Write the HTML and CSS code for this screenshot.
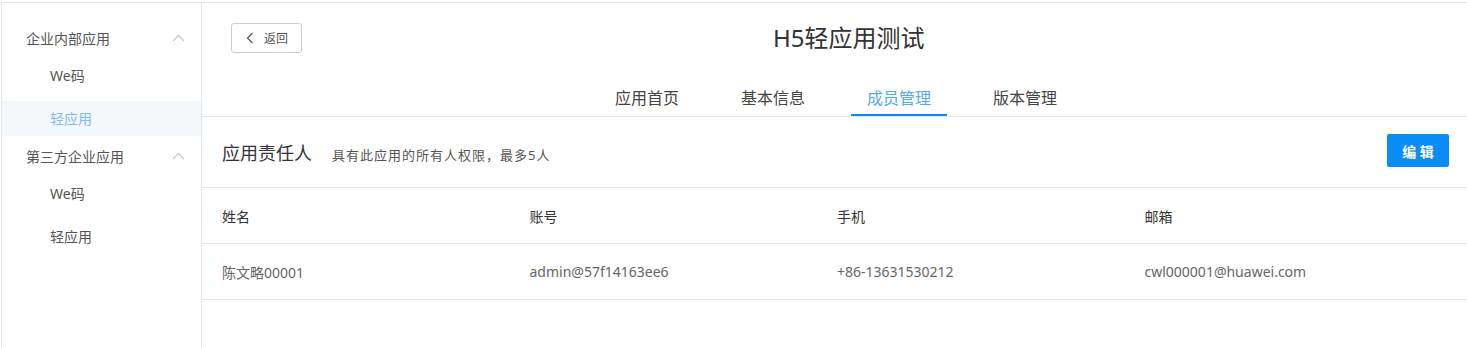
FILE: index.html
```html
<!DOCTYPE html>
<html lang="zh-CN">
<head>
    <meta charset="UTF-8">
    <title>H5轻应用测试</title>
    <link rel="stylesheet" href="styles.css">
</head>
<body>
    <div class="frame">
        <aside class="sidebar">
            <div class="menu-group">
                <div class="menu-title">
                    <span>企业内部应用</span>
                    <svg class="chevron" width="13" height="8" viewBox="0 0 13 8"><path d="M1 7 L6.5 1.5 L12 7" fill="none" stroke="#c4c8cf" stroke-width="1.3"/></svg>
                </div>
                <ul class="menu-items">
                    <li>We码</li>
                    <li class="active">轻应用</li>
                </ul>
            </div>
            <div class="menu-group">
                <div class="menu-title">
                    <span>第三方企业应用</span>
                    <svg class="chevron" width="13" height="8" viewBox="0 0 13 8"><path d="M1 7 L6.5 1.5 L12 7" fill="none" stroke="#c4c8cf" stroke-width="1.3"/></svg>
                </div>
                <ul class="menu-items">
                    <li>We码</li>
                    <li>轻应用</li>
                </ul>
            </div>
        </aside>

        <main class="content">
            <header class="app-header">
                <div class="top-row">
                    <button class="back-btn">
                        <svg width="8" height="12" viewBox="0 0 8 12"><path d="M6.5 1 L1.5 6 L6.5 11" fill="none" stroke="#555" stroke-width="1.2"/></svg>
                        <span>返回</span>
                    </button>
                    <h1 class="app-title">H5轻应用测试</h1>
                </div>
                <nav class="tabs">
                    <a class="tab">应用首页</a>
                    <a class="tab">基本信息</a>
                    <a class="tab active">成员管理</a>
                    <a class="tab">版本管理</a>
                </nav>
            </header>

            <section class="owners">
                <div class="section-head">
                    <div class="section-title">
                        <h2>应用责任人</h2>
                        <span class="hint">具有此应用的所有人权限，最多5人</span>
                    </div>
                    <button class="edit-btn">编 辑</button>
                </div>
                <div class="table">
                    <div class="row head">
                        <div>姓名</div>
                        <div>账号</div>
                        <div>手机</div>
                        <div>邮箱</div>
                    </div>
                    <div class="row">
                        <div>陈文略00001</div>
                        <div>admin@57f14163ee6</div>
                        <div>+86-13631530212</div>
                        <div>cwl000001@huawei.com</div>
                    </div>
                </div>
            </section>
        </main>
    </div>
</body>
</html>
```

FILE: styles.css
```css
/* Basic styling */
* {
    box-sizing: border-box;
}

body {
    margin: 0;
    padding: 2px 0 0 1px;
    font-family: "Noto Sans", "Noto Sans CJK SC", sans-serif;
    background-color: #fff;
    color: #333;
}

.frame {
    display: flex;
    height: 346px;
    border-top: 1px solid #dfe6ee;
    border-left: 1px solid #dfe6ee;
}

/* Sidebar */
.sidebar {
    width: 200px;
    flex-shrink: 0;
    border-right: 1px solid #dfe6ee;
    padding-top: 17px;
}

.menu-title {
    display: flex;
    align-items: center;
    justify-content: space-between;
    height: 36px;
    padding: 0 16px 0 24px;
    font-size: 14px;
    color: #555;
}

.chevron {
    display: block;
}

.menu-items {
    list-style: none;
    margin: 2px 0;
    padding: 0;
}

.menu-items li {
    height: 35px;
    line-height: 35px;
    padding-left: 48px;
    font-size: 14px;
    color: #555;
}

.menu-items li + li {
    margin-top: 8px;
}

.menu-items li.active {
    background-color: #f5f8fb;
    color: #7dbdf5;
}

/* Main area */
.content {
    flex: 1;
    min-width: 0;
}

.app-header {
    padding-top: 20px;
    border-bottom: 1px solid #dfe6ee;
}

.top-row {
    display: flex;
    align-items: center;
    height: 30px;
    padding-left: 29px;
}

.back-btn {
    display: flex;
    align-items: center;
    gap: 10px;
    width: 71px;
    height: 30px;
    padding: 0 0 0 14px;
    background: #fff;
    border: 1px solid #ccc;
    border-radius: 3px;
    font-family: inherit;
    font-size: 12px;
    color: #555;
    cursor: pointer;
}

.app-title {
    margin: 0 0 0 471px;
    font-size: 24px;
    font-weight: normal;
    line-height: 30px;
    color: #333;
}

.tabs {
    display: flex;
    justify-content: center;
    gap: 30px;
    margin-top: 29px;
    padding-left: 3px;
}

.tab {
    height: 34px;
    line-height: 32px;
    padding: 0 16px;
    font-size: 16px;
    color: #444;
    border-bottom: 2px solid transparent;
    cursor: pointer;
}

.tab.active {
    color: #55a9f3;
    border-bottom-color: #0a8cf5;
}

/* Owners section */
.section-head {
    display: flex;
    align-items: center;
    justify-content: space-between;
    height: 71px;
    padding: 0 18px 0 20px;
    border-bottom: 1px solid #dfe6ee;
}

.section-title {
    display: flex;
    align-items: baseline;
    gap: 20px;
}

.section-title h2 {
    margin: 0;
    font-size: 18px;
    font-weight: normal;
    color: #333;
}

.hint {
    font-size: 13px;
    letter-spacing: 1px;
    color: #555;
}

.edit-btn {
    width: 62px;
    height: 33px;
    margin-top: -3px;
    border: none;
    border-radius: 2px;
    background-color: #0a8cf5;
    color: #fff;
    font-family: inherit;
    font-size: 14px;
    font-weight: bold;
    cursor: pointer;
}

.row {
    display: grid;
    grid-template-columns: repeat(4, 1fr);
    align-items: center;
    height: 56px;
    padding: 0 15px 0 20px;
    border-bottom: 1px solid #dfe6ee;
    font-size: 14px;
    color: #666;
}

.row.head {
    color: #333;
}
```
